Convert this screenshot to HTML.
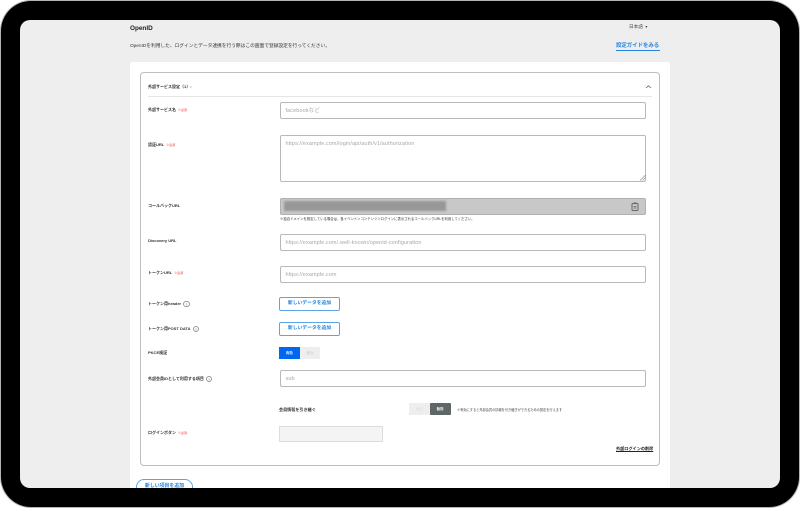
<!DOCTYPE html>
<html lang="ja">
<head>
<meta charset="utf-8">
<title>OpenID</title>
<style>
html,body{margin:0;padding:0;width:800px;height:508px;overflow:hidden;background:#fff}
*{box-sizing:border-box}
body{font-family:"Liberation Sans","Noto Sans CJK JP",sans-serif;color:#222;position:relative}
#frame{position:absolute;left:1px;top:1px;width:798px;height:506px;background:#000;border-radius:30px;box-shadow:0 0 0 1px #b4b4b4}
#screen{position:absolute;left:20px;top:20px;width:760px;height:468px;background:#eee;border-radius:10px;overflow:hidden;filter:blur(.3px)}
#screen>*{position:absolute}
.t{white-space:nowrap;line-height:10px;height:10px}
.l{font-size:4px;font-weight:700;color:#333}
.r{color:#e8343a;font-size:3px;font-weight:400;margin-left:2px}
.i{background:#fff;border:1px solid #b8b8b8;border-radius:2px;left:260px;width:366px;color:#a8a8a8;font-size:5.5px;padding-left:4.5px;line-height:17px;letter-spacing:.1px;white-space:nowrap}
.b{left:259px;width:61px;height:14px;background:#fff;border:1px solid #5aa5ea;border-radius:2px;color:#2484dc;font-size:4.8px;font-weight:700;text-align:center;line-height:12px;white-space:nowrap}
.q{display:inline-block;width:6.5px;height:6.5px;border:.6px solid #999;border-radius:50%;font-size:4px;line-height:5.5px;text-align:center;font-weight:400;color:#888;margin-left:2px;vertical-align:middle}
</style>
</head>
<body>
<div id="frame"></div>
<div id="screen">
  <div class="t" style="left:110px;top:3.5px;font-size:6.4px;font-weight:700;color:#222">OpenID</div>
  <div class="t" style="left:110px;top:21.5px;font-size:4.74px;color:#333">OpenIDを利用した、ログインとデータ連携を行う際はこの画面で登録設定を行ってください。</div>
  <div class="t" style="left:609px;top:1.5px;font-size:4.6px;color:#444">日本語&nbsp;&nbsp;<span style="font-size:4px">▾</span></div>
  <div class="t" style="left:596px;top:20.5px;font-size:5.4px;font-weight:700;color:#2484dc">設定ガイドをみる</div>
  <div style="left:596px;top:30px;width:44px;height:1px;background:#2484dc"></div>

  <div style="left:110px;top:42px;width:540px;height:440px;background:#fff;border-radius:3px"></div>
  <div style="left:120px;top:52px;width:520px;height:393.5px;background:#fff;border:1px solid #bdbdbd;border-radius:4px"></div>

  <div class="t l" style="left:128px;top:62px">外部サービス設定（1）:</div>
  <svg style="left:625px;top:64px" width="7" height="6" viewBox="0 0 7 6"><path d="M1 4 L3.5 1.8 L6 4" fill="none" stroke="#666" stroke-width=".8"/></svg>
  <div style="left:128px;top:76px;width:504px;height:1px;background:#e6e6e6"></div>

  <div class="t l" style="left:128px;top:85px">外部サービス名<span class="r">※必須</span></div>
  <div class="i" style="top:82px;height:17px">facebookなど</div>

  <div class="t l" style="left:128px;top:120px">認証URL<span class="r">※必須</span></div>
  <div class="i" style="top:115px;height:47px">https://example.com/login/api/auth/v1/authorization</div>
  <svg style="left:619px;top:154px" width="7" height="7" viewBox="0 0 7 7"><path d="M1 6.5 L6.5 1 M3.5 6.5 L6.5 3.5" stroke="#888" stroke-width=".6"/></svg>

  <div class="t l" style="left:128px;top:181px">コールバックURL</div>
  <div style="left:260px;top:178px;width:366px;height:17px;background:#c8c8c8;border:1px solid #b0b0b0;border-radius:2px"></div>
  <div style="left:264px;top:181px;width:162px;height:10px;background:#979797;filter:blur(1px)"></div>
  <svg style="left:611px;top:182px" width="8" height="9" viewBox="0 0 8 9"><rect x="1" y="1.5" width="6" height="7" rx=".7" fill="none" stroke="#666" stroke-width="1"/><rect x="2.6" y=".5" width="2.8" height="1.6" fill="#666"/><path d="M2.5 4.5H5.5M2.5 6H5.5" stroke="#666" stroke-width=".7"/></svg>
  <div class="t" style="left:260px;top:193.5px;font-size:3.37px;color:#333">※独自ドメインを設定している場合は、各イベント＞コンテンツ＞ログインに表示されるコールバックURLを利用してください。</div>

  <div class="t l" style="left:128px;top:216px">Discovery URL</div>
  <div class="i" style="top:214px;height:17px">https://example.com/.well-known/openid-configuration</div>

  <div class="t l" style="left:128px;top:248px">トークンURL<span class="r">※必須</span></div>
  <div class="i" style="top:246px;height:17px">https://example.com</div>

  <div class="t l" style="left:128px;top:279px">トークン用header<span class="q">?</span></div>
  <div class="b" style="top:277px">新しいデータを追加</div>

  <div class="t l" style="left:128px;top:304px">トークン用POST DATA<span class="q">?</span></div>
  <div class="b" style="top:302px">新しいデータを追加</div>

  <div class="t l" style="left:128px;top:327.5px">PKCE検証</div>
  <div style="left:259px;top:327px;width:20.5px;height:12px;background:#0068f0;color:#fff;font-size:3.4px;text-align:center;line-height:12px;font-weight:700">有効</div>
  <div style="left:280px;top:327px;width:20px;height:12px;background:#eee;color:#ccc;font-size:3.4px;text-align:center;line-height:12px">無効</div>

  <div class="t l" style="left:128px;top:354px">外部会員IDとして利用する項目<span class="q">?</span></div>
  <div class="i" style="top:350px;height:17px">sub</div>

  <div class="t" style="left:259px;top:384.5px;font-size:4.1px;font-weight:700;color:#333">会員情報を引き継ぐ</div>
  <div style="left:389px;top:383px;width:20.5px;height:12px;background:#eee;color:#ddd;font-size:3.4px;text-align:center;line-height:12px">有効</div>
  <div style="left:409.5px;top:383px;width:21px;height:12px;background:#5f6666;color:#fff;font-size:3.4px;text-align:center;line-height:12px;font-weight:700;border-radius:1px">無効</div>
  <div class="t" style="left:437px;top:384.5px;font-size:3.2px;color:#444">※有効にすると外部会員の情報を引き継ぎができるための設定を行えます</div>

  <div class="t l" style="left:128px;top:408px">ログインボタン<span class="r">※必須</span></div>
  <div style="left:259px;top:406px;width:104px;height:16px;background:#f4f4f4;border:1px solid #ddd"></div>

  <div class="t" style="left:596px;top:424px;font-size:4.15px;font-weight:700;color:#222;text-decoration:underline">外部ログインの削除</div>

  <div style="left:116px;top:459px;width:57px;height:16px;background:#fff;border:1px solid #5aa5ea;border-radius:8px;color:#2484dc;font-size:4.9px;font-weight:700;text-align:center;line-height:14.5px;white-space:nowrap">新しい項目を追加</div>
</div>
</body>
</html>
